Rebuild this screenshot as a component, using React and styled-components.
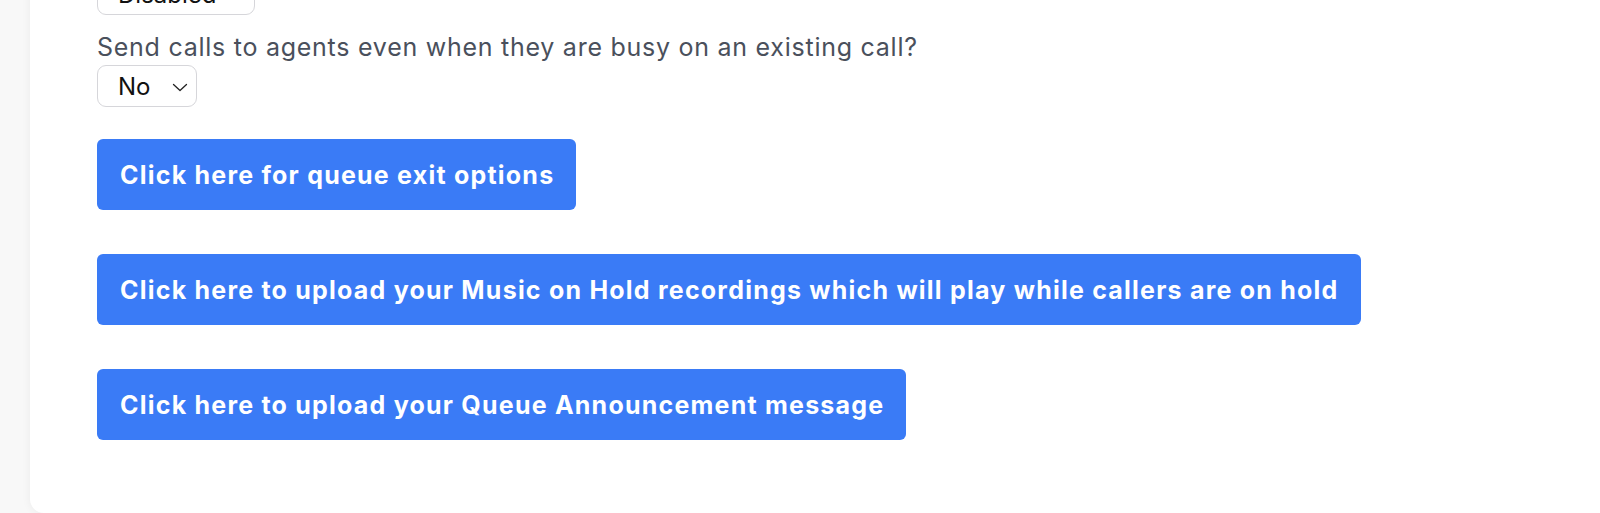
import React from "react"
import styled, { createGlobalStyle } from "styled-components"

const GlobalStyle = createGlobalStyle`
  html, body {
    margin: 0;
    padding: 0;
    background: #f8f8f8;
    font-family: Inter, "Liberation Sans", Arial, sans-serif;
  }
`

const Page = styled.div`
  height: 513px;
  overflow: hidden;
  padding-left: 30px;
  box-sizing: border-box;
`

const Card = styled.section`
  background: #ffffff;
  margin-top: -41px;
  height: 554px;
  box-sizing: border-box;
  border-radius: 0 0 0 14px;
  box-shadow: 0 0 10px rgba(0, 0, 0, 0.06);
  padding: 14px 0 0 67px;
  display: flex;
  flex-direction: column;
  align-items: flex-start;
`

const Field = styled.div`
  display: flex;
  flex-direction: column;
  align-items: flex-start;
  gap: 2px;
  margin-bottom: ${props => props.gap || 0}px;
`

const Label = styled.label`
  font-size: 25px;
  line-height: 32px;
  letter-spacing: 0.74px;
  color: #4a505c;
`

const SelectBox = styled.div`
  position: relative;
  display: inline-flex;
  align-items: center;
  height: 42px;
  width: ${props => props.width}px;
  box-sizing: border-box;
  border: 1px solid #d6d6da;
  border-radius: 9px;
  padding-left: 20px;
  font-size: 24px;
  color: #111111;
  background: #ffffff;

  svg {
    position: absolute;
    right: 8px;
    top: 17px;
  }
`

const Chevron = () => (
  <svg width="16" height="9" viewBox="0 0 16 9" fill="none">
    <path d="M1.5 1.5l6.5 6 6.5-6" stroke="#222" strokeWidth="1.3" strokeLinecap="round" strokeLinejoin="round" />
  </svg>
)

const Button = styled.button`
  display: inline-flex;
  align-items: center;
  height: 71px;
  padding: 0 22px 0 23px;
  border: none;
  border-radius: 6px;
  background: #3a7bf6;
  color: #ffffff;
  font-family: inherit;
  font-size: 25px;
  font-weight: 700;
  letter-spacing: 1.22px;
  margin-bottom: 44px;
  cursor: pointer;
`

export default function App() {
  return (
    <>
      <GlobalStyle />
      <Page>
        <Card>
          <Field gap={16}>
            <SelectBox width={158}>Disabled<Chevron /></SelectBox>
          </Field>
          <Field gap={32}>
            <Label>Send calls to agents even when they are busy on an existing call?</Label>
            <SelectBox width={100}>No<Chevron /></SelectBox>
          </Field>
          <Button>Click here for queue exit options</Button>
          <Button>Click here to upload your Music on Hold recordings which will play while callers are on hold</Button>
          <Button>Click here to upload your Queue Announcement message</Button>
        </Card>
      </Page>
    </>
  )
}
